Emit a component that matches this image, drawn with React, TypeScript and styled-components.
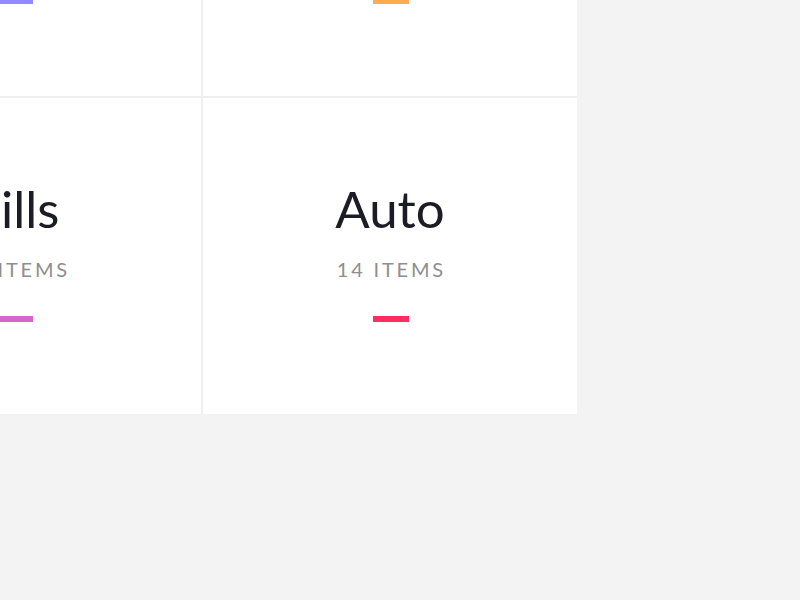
import React from "react";
import styled, { createGlobalStyle } from "styled-components";

const GlobalStyle = createGlobalStyle`
  html, body {
    margin: 0;
    padding: 0;
    background: #f3f3f3;
    overflow: hidden;
  }
  body {
    font-family: Lato, "Open Sans", sans-serif;
  }
`;

const Viewport = styled.div`
  width: 800px;
  height: 600px;
  overflow: hidden;
  background: #f3f3f3;
`;

const Grid = styled.div`
  display: grid;
  width: max-content;
  grid-template-columns: 374px 374px;
  grid-auto-rows: 316px;
  gap: 2px;
  background: #efefef;
  margin-left: -173px;
  margin-top: -220px;
`;

const Card = styled.div`
  background: #ffffff;
  box-sizing: border-box;
  padding-top: 85px;
  display: flex;
  flex-direction: column;
  align-items: center;
`;

const Title = styled.div`
  font-family: Lato, sans-serif;
  font-weight: 400;
  font-size: 51px;
  line-height: 52px;
  color: #1c1c24;
`;

const Count = styled.div`
  margin-top: 24px;
  font-family: Lato, sans-serif;
  font-weight: 400;
  font-size: 20px;
  line-height: 20px;
  letter-spacing: 2.8px;
  color: #8e8e8e;
  text-transform: uppercase;
  padding-left: 2.8px;
`;

const Bar = styled.div<{ $color: string }>`
  margin-top: 37px;
  width: 36px;
  height: 6px;
  background: ${(p) => p.$color};
  margin-left: 2px;
`;

const categories = [
  { name: "Food", count: 32, color: "#9189ff" },
  { name: "Shopping", count: 18, color: "#ffab50" },
  { name: "Bills", count: 23, color: "#d665cd" },
  { name: "Auto", count: 14, color: "#ff2d62" },
];

export default function App() {
  return (
    <Viewport>
      <GlobalStyle />
      <Grid>
        {categories.map((c) => (
          <Card key={c.name}>
            <Title>{c.name}</Title>
            <Count>{c.count} items</Count>
            <Bar $color={c.color} />
          </Card>
        ))}
      </Grid>
    </Viewport>
  );
}
